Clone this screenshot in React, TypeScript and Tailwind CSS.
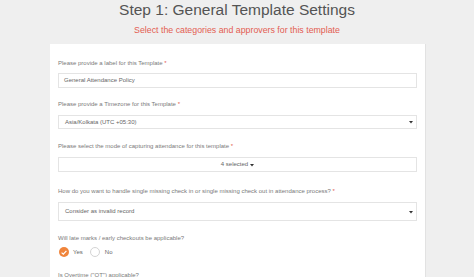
import React from "react";

const Label = ({ text, className = "" }: { text: string; className?: string }) => (
  <div className={`h-[10px] leading-[10px] text-[6px] text-[#7a7a7a] whitespace-nowrap ${className}`}>
    {text}
    {" "}
    <span className="text-[#e35d52]">*</span>
  </div>
);

const Caret = () => (
  <svg width="4" height="4" viewBox="0 0 4 4" className="shrink-0">
    <path d="M0 1 L4 1 L2 3.5 Z" fill="#333" />
  </svg>
);

export default function App() {
  return (
    <div
      className="min-h-screen w-full bg-[#efefef] overflow-hidden"
      style={{ fontFamily: '"Liberation Sans", Arial, sans-serif' }}
    >
      <h1 className="h-[20px] leading-[20px] text-[15.5px] text-[#545454] text-center whitespace-nowrap">
        Step 1: General Template Settings
      </h1>
      <p className="mt-[4px] h-[12px] leading-[12px] text-[8.8px] text-[#e35d52] text-center whitespace-nowrap">
        Select the categories and approvers for this template
      </p>
      <div className="mt-[8px] ml-[50px] w-[375px] h-[233px] overflow-hidden bg-white pt-[14px] pl-[8px] pr-[8px] shadow-[1px_0_0_#e2e2e2]">
        <Label text="Please provide a label for this Template" />
        <div className="mt-[5px] h-[15px] w-[359px] border border-[#e4e4e4] flex items-center pl-[5px] text-[6px] text-[#666]">
          General Attendance Policy
        </div>

        <Label text="Please provide a Timezone for this Template" className="mt-[11px]" />
        <div className="mt-[6px] h-[14px] w-[359px] border border-[#e4e4e4] flex items-center justify-between pl-[6px] pr-[3px] text-[6px] text-[#666]">
          <span>Asia/Kolkata (UTC +05:30)</span>
          <Caret />
        </div>

        <Label text="Please select the mode of capturing attendance for this template" className="mt-[12px]" />
        <div className="mt-[6px] h-[15px] w-[359px] border border-[#e4e4e4] flex items-center justify-center gap-[2px] text-[6px] text-[#666]">
          <span>4 selected</span>
          <Caret />
        </div>

        <Label
          text="How do you want to handle single missing check in or single missing check out in attendance process?"
          className="mt-[14px]"
        />
        <div className="mt-[6px] h-[19px] w-[359px] border border-[#e4e4e4] flex items-center justify-between pl-[6px] pr-[3px] text-[6px] text-[#666]">
          <span>Consider as invalid record</span>
          <Caret />
        </div>

        <div className="mt-[12px] h-[10px] leading-[10px] text-[6px] text-[#7a7a7a] whitespace-nowrap">
          Will late marks / early checkouts be applicable?
        </div>
        <div className="mt-[4px] h-[10px] flex items-center text-[6px] text-[#666] pl-[1px]">
          <span className="w-[10px] h-[10px] rounded-full bg-[#f0853c] flex items-center justify-center">
            <svg width="6" height="5" viewBox="0 0 6 5">
              <path d="M0.6 2.6 L2.3 4.1 L5.4 0.8" stroke="#fff" strokeWidth="1.2" fill="none" />
            </svg>
          </span>
          <span className="ml-[4px]">Yes</span>
          <span className="ml-[7px] w-[10px] h-[10px] rounded-full border border-[#d4d4d4] bg-white" />
          <span className="ml-[5px]">No</span>
        </div>

        <div className="mt-[13px] h-[10px] leading-[10px] text-[6px] text-[#7a7a7a] whitespace-nowrap">
          Is Overtime ("OT") applicable?
        </div>
      </div>
    </div>
  );
}
